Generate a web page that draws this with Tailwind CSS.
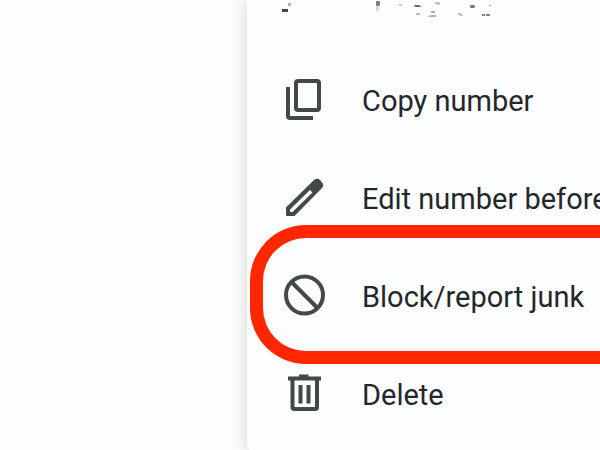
<!DOCTYPE html>
<html lang="en">
<head>
  <meta charset="UTF-8">
  <meta name="viewport" content="width=device-width, initial-scale=1">
  <title>Call options</title>
  <script src="https://cdn.jsdelivr.net/npm/@tailwindcss/browser@4"></script>
</head>
<body class="bg-[#fdfdfd] min-h-screen overflow-hidden font-['Roboto','Liberation_Sans',sans-serif] text-[29px] leading-9 text-[#24272a]">
  <div class="pl-[247px]">
    <div class="bg-[#fcfdfe] rounded-bl-lg pb-2 shadow-[0_0_18px_rgba(0,0,0,0.18)]">

      <!-- erased phone number -->
      <div class="h-[52px] pl-8">
        <svg class="block" width="240" height="28" viewBox="0 0 240 28" aria-hidden="true">
          <g fill="#444">
            <rect x="3" y="9" width="6" height="3"/>
            <rect x="9" y="3" width="3" height="3" opacity=".4"/>
            <rect x="97" y="1" width="4" height="5" rx="1" opacity=".7"/>
            <rect x="97" y="6" width="3" height="5" opacity=".2"/>
            <rect x="120" y="4" width="3" height="2" opacity=".25"/>
            <path d="M135 5h5l3 2h-7z" opacity=".8"/>
            <rect x="137" y="13" width="4" height="2" opacity=".35"/>
            <path d="M156 2h5v3l-5-1z" opacity=".3"/>
            <path d="M152 11h4v2h-4zM149 16l3-1h5v2h-7z" opacity=".4"/>
            <path d="M178 13h4l2 3h-3z" opacity=".35"/>
            <rect x="191" y="5" width="5" height="3" rx="1" opacity=".7"/>
            <rect x="210" y="5" width="2" height="1" opacity=".5"/>
            <rect x="203" y="14" width="3" height="2" opacity=".65"/>
            <rect x="207" y="14" width="4" height="2" opacity=".65"/>
          </g>
        </svg>
      </div>

      <ul>
        <li>
          <button type="button" class="flex items-center gap-[34px] w-full h-[98px] pl-[33px] text-left whitespace-nowrap">
            <svg class="size-12 shrink-0" viewBox="0 0 48 48" fill="none" stroke="#434849" stroke-width="4" aria-hidden="true">
              <rect x="16" y="4" width="23" height="29" rx="2"/>
              <path d="M8 10v29q0 2 2 2h23"/>
            </svg>
            Copy number
          </button>
        </li>
        <li>
          <button type="button" class="flex items-center gap-[34px] w-full h-[98px] pl-[33px] text-left whitespace-nowrap">
            <svg class="size-12 shrink-0" viewBox="0 0 48 48" fill="#434849" aria-hidden="true">
              <path fill-rule="evenodd" d="M6 32.500 34 5Q37 2.500 40 5L42 7.500Q44.500 10 42 13L14.500 41H7Q6 41 6 40ZM10 34.500V37H12.500L32.500 17.500 30 15Z"/>
            </svg>
            Edit number before call
          </button>
        </li>
        <li class="relative">
          <button type="button" class="flex items-center gap-[34px] w-full h-[98px] pl-[33px] text-left whitespace-nowrap">
            <svg class="size-12 shrink-0" viewBox="0 0 48 48" fill="none" stroke="#434849" stroke-width="4" aria-hidden="true">
              <circle cx="24.500" cy="22" r="18.500"/>
              <path d="M11.500 9 37.500 35"/>
            </svg>
            Block/report junk
          </button>
          <!-- highlight -->
          <div class="absolute left-[3px] right-0 -top-[23px] -bottom-[18px] border-[13px] border-r-0 border-[#ff2600] rounded-l-[56px] pointer-events-none"></div>
        </li>
        <li>
          <button type="button" class="flex items-center gap-[34px] w-full h-[98px] pl-[33px] text-left whitespace-nowrap">
            <svg class="size-12 shrink-0" viewBox="0 0 48 48" fill="none" stroke="#434849" stroke-width="4" aria-hidden="true">
              <path d="M8 7.500H41M19 5.500H28.500M12.500 7.500V36q0 2 2 2H35q2 0 2-2V7.500M20.500 14V32.500M28.500 14V32.500"/>
            </svg>
            Delete
          </button>
        </li>
      </ul>
    </div>
  </div>
</body>
</html>
